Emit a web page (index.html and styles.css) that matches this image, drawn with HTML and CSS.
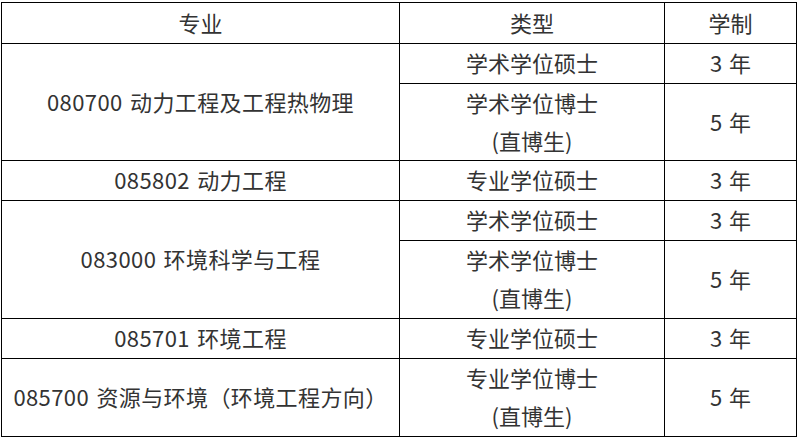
FILE: index.html
```html
<!DOCTYPE html>
<html lang="zh-CN">
<head>
<meta charset="utf-8">
<link rel="stylesheet" href="styles.css">
</head>
<body>
<div class="table">
  <div class="cell">专业</div>
  <div class="cell">类型</div>
  <div class="cell">学制</div>

  <div class="cell major r2-3">080700 动力工程及工程热物理</div>
  <div class="cell">学术学位硕士</div>
  <div class="cell">3 年</div>
  <div class="cell">学术学位博士<br>(直博生)</div>
  <div class="cell">5 年</div>

  <div class="cell major">085802 动力工程</div>
  <div class="cell">专业学位硕士</div>
  <div class="cell">3 年</div>

  <div class="cell major r5-6">083000 环境科学与工程</div>
  <div class="cell">学术学位硕士</div>
  <div class="cell">3 年</div>
  <div class="cell">学术学位博士<br>(直博生)</div>
  <div class="cell">5 年</div>

  <div class="cell major">085701 环境工程</div>
  <div class="cell">专业学位硕士</div>
  <div class="cell">3 年</div>

  <div class="cell major">085700 资源与环境（环境工程方向）</div>
  <div class="cell">专业学位博士<br>(直博生)</div>
  <div class="cell">5 年</div>
</div>
</body>
</html>
```

FILE: styles.css
```css
html, body {
  margin: 0;
  padding: 0;
  background: #fff;
}
body {
  padding: 2px 0 0 1px;
}
.table {
  width: 796px;
  box-sizing: border-box;
  display: grid;
  grid-template-columns: 397px 264px 131px;
  grid-template-rows: 40px 39px 76px 39px 39px 77px 39px 77px;
  gap: 1px;
  padding: 1px;
  background: #000;
  font-family: "Noto Sans CJK SC", "Microsoft YaHei", sans-serif;
  font-size: 22px;
  line-height: 38px;
  color: #333;
  word-spacing: 2px;
}
.cell {
  background: #fff;
  display: flex;
  align-items: center;
  justify-content: center;
  text-align: center;
  white-space: nowrap;
  padding-bottom: 3px;
}
.major {
  letter-spacing: 0.4px;
}
.r2-3 {
  grid-column: 1;
  grid-row: 2 / span 2;
}
.r5-6 {
  grid-column: 1;
  grid-row: 5 / span 2;
}
```
